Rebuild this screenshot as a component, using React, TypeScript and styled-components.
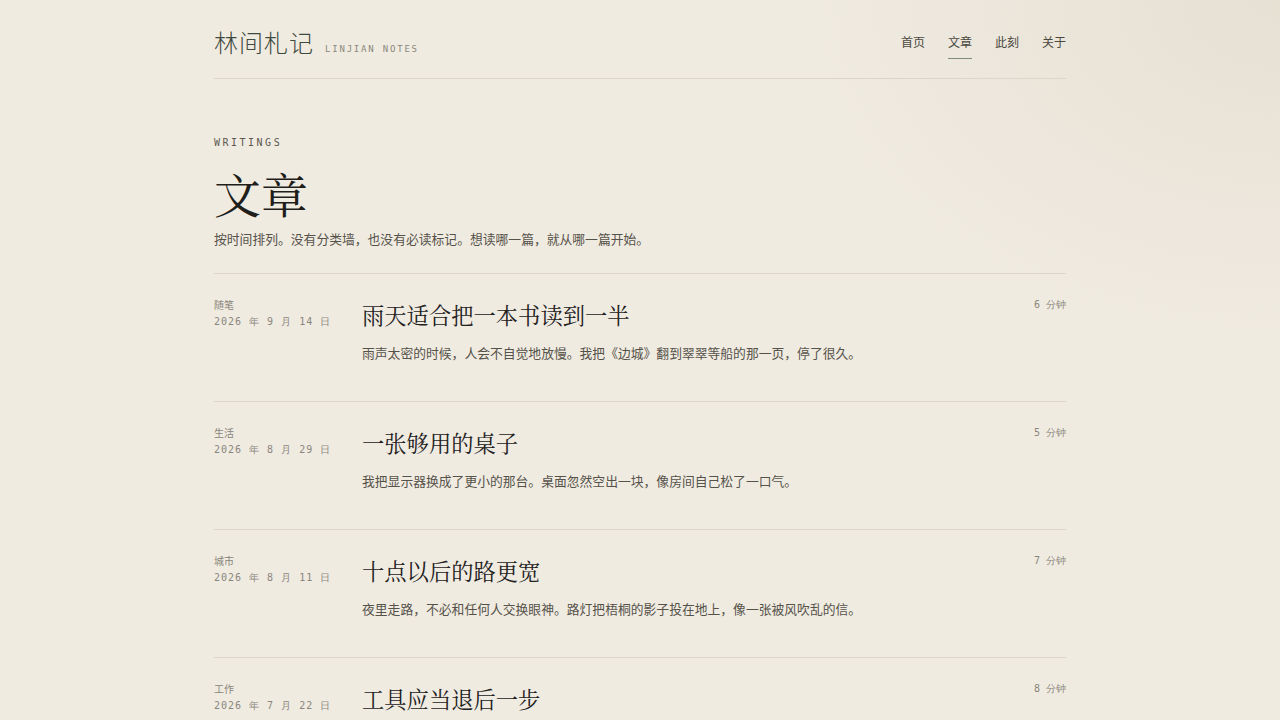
import React from "react";
import styled, { createGlobalStyle } from "styled-components";

const Global = createGlobalStyle`
  html, body { margin: 0; padding: 0; }
  body {
    background: #f0ebe1;
    font-family: "Noto Sans CJK SC", "Noto Sans", sans-serif;
    color: #2b2a25;
  }
`;

const Page = styled.div`
  min-height: 720px;
  background:
    radial-gradient(ellipse 700px 500px at 100% 0%, rgba(226, 220, 206, 0.7), rgba(226, 220, 206, 0) 70%),
    #f0ebe1;
`;

const Container = styled.div`
  width: 852px;
  margin: 0 auto;
`;

const Header = styled.header`
  display: flex;
  align-items: center;
  justify-content: space-between;
  height: 79px;
  padding-top: 5px;
  box-sizing: border-box;
  border-bottom: 1px solid #dcd6ca;
`;

const Brand = styled.div`
  display: flex;
  align-items: baseline;
  gap: 11px;
`;

const Logo = styled.span`
  font-size: 24px;
  font-weight: 300;
  letter-spacing: 1px;
  color: #3f4a40;
`;

const LogoSub = styled.span`
  font-family: "DejaVu Sans Mono", "Liberation Mono", monospace;
  font-size: 9px;
  letter-spacing: 1.8px;
  color: #8a877c;
`;

const Nav = styled.nav`
  display: flex;
  gap: 23px;
`;

const NavItem = styled.a<{ $active?: boolean }>`
  position: relative;
  font-size: 12px;
  color: #4a4840;
  text-decoration: none;
  padding: 5px 0 6px;
  &::after {
    content: "";
    position: absolute;
    left: 0;
    right: 0;
    bottom: -3px;
    height: 1px;
    background: ${(p) => (p.$active ? "#7f8b7e" : "transparent")};
  }
`;

const Intro = styled.section`
  padding: 57px 0 23px;
  border-bottom: 1px solid #dcd6ca;
`;

const Eyebrow = styled.div`
  font-family: "DejaVu Sans Mono", "Liberation Mono", monospace;
  font-size: 10px;
  letter-spacing: 2.5px;
  color: #5a5850;
  line-height: 14px;
`;

const PageTitle = styled.h1`
  margin: 11px 0 0;
  font-family: "Noto Serif CJK SC", "Noto Serif SC", "Noto Serif CJK JP", serif;
  font-weight: 400;
  font-size: 47px;
  line-height: 64px;
  color: #1f1e1a;
`;

const Lead = styled.p`
  margin: 3px 0 0;
  font-size: 12.8px;
  line-height: 22px;
  color: #55524a;
`;

const List = styled.div`
  display: flex;
  flex-direction: column;
`;

const Row = styled.article`
  display: grid;
  grid-template-columns: 148px 1fr auto;
  height: 128px;
  box-sizing: border-box;
  padding-top: 24px;
  border-bottom: 1px solid #dcd6ca;
`;

const Meta = styled.div`
  display: flex;
  flex-direction: column;
  gap: 3px;
`;

const Category = styled.span`
  font-size: 10px;
  line-height: 14px;
  color: #8a857a;
`;

const DateText = styled.span`
  font-family: "DejaVu Sans Mono", "Liberation Mono", monospace;
  font-size: 10px;
  line-height: 14px;
  letter-spacing: 1px;
  color: #8a867e;
`;

const Main = styled.div`
  display: flex;
  flex-direction: column;
`;

const PostTitle = styled.h2`
  margin: 0;
  font-family: "Noto Serif CJK SC", "Noto Serif SC", "Noto Serif CJK JP", serif;
  font-weight: 400;
  font-size: 22.3px;
  line-height: 32px;
  color: #22211d;
`;

const Excerpt = styled.p`
  margin: 12px 0 0;
  font-size: 12.8px;
  line-height: 22px;
  color: #55524a;
`;

const ReadTime = styled.span`
  font-family: "DejaVu Sans Mono", "Liberation Mono", monospace;
  font-size: 10px;
  line-height: 14px;
  color: #8a857a;
`;

const posts = [
  {
    cat: "随笔",
    date: "2026 年 9 月 14 日",
    title: "雨天适合把一本书读到一半",
    excerpt: "雨声太密的时候，人会不自觉地放慢。我把《边城》翻到翠翠等船的那一页，停了很久。",
    time: "6 分钟",
  },
  {
    cat: "生活",
    date: "2026 年 8 月 29 日",
    title: "一张够用的桌子",
    excerpt: "我把显示器换成了更小的那台。桌面忽然空出一块，像房间自己松了一口气。",
    time: "5 分钟",
  },
  {
    cat: "城市",
    date: "2026 年 8 月 11 日",
    title: "十点以后的路更宽",
    excerpt: "夜里走路，不必和任何人交换眼神。路灯把梧桐的影子投在地上，像一张被风吹乱的信。",
    time: "7 分钟",
  },
  {
    cat: "工作",
    date: "2026 年 7 月 22 日",
    title: "工具应当退后一步",
    excerpt: "好的工具不抢话。它在你需要的时候出现，在你专注的时候安静下来。",
    time: "8 分钟",
  },
];

export default function App() {
  return (
    <Page>
      <Global />
      <Container>
        <Header>
          <Brand>
            <Logo>林间札记</Logo>
            <LogoSub>LINJIAN NOTES</LogoSub>
          </Brand>
          <Nav>
            <NavItem>首页</NavItem>
            <NavItem $active>文章</NavItem>
            <NavItem>此刻</NavItem>
            <NavItem>关于</NavItem>
          </Nav>
        </Header>
        <Intro>
          <Eyebrow>WRITINGS</Eyebrow>
          <PageTitle>文章</PageTitle>
          <Lead>按时间排列。没有分类墙，也没有必读标记。想读哪一篇，就从哪一篇开始。</Lead>
        </Intro>
        <List>
          {posts.map((p) => (
            <Row key={p.title}>
              <Meta>
                <Category>{p.cat}</Category>
                <DateText>{p.date}</DateText>
              </Meta>
              <Main>
                <PostTitle>{p.title}</PostTitle>
                <Excerpt>{p.excerpt}</Excerpt>
              </Main>
              <ReadTime>{p.time}</ReadTime>
            </Row>
          ))}
        </List>
      </Container>
    </Page>
  );
}
